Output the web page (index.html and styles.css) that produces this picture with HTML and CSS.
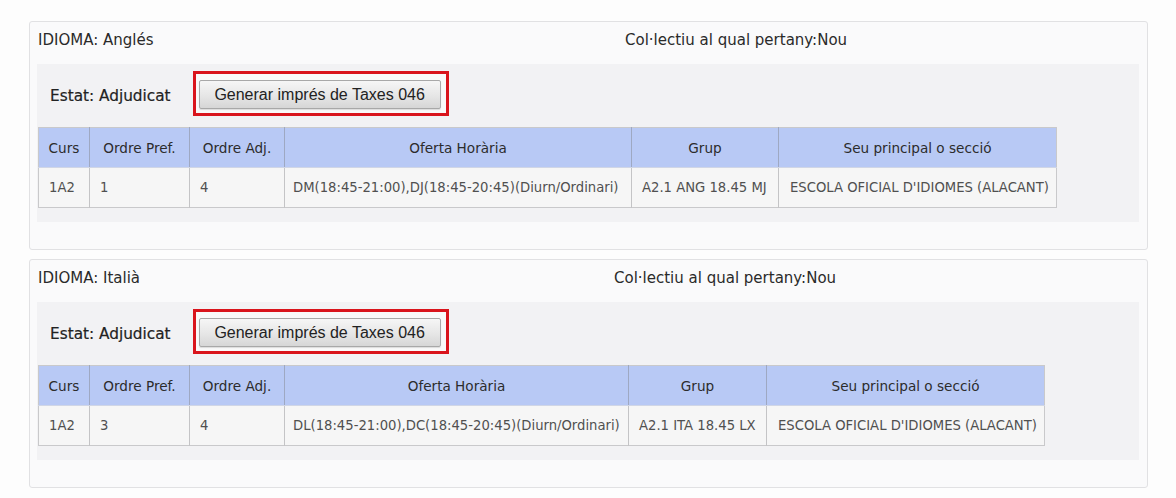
FILE: index.html
```html
<!DOCTYPE html>
<html lang="ca">
<head>
<meta charset="utf-8">
<title>Adjudicació</title>
<link rel="stylesheet" href="styles.css">
</head>
<body>
<main class="page">
  <section class="panel">
    <div class="panel-head head-a">
      <span class="idioma">IDIOMA: Anglés</span>
      <span class="colectiu">Col·lectiu al qual pertany:Nou</span>
    </div>
    <div class="inner">
      <div class="estat-row">
        <span class="estat">Estat: Adjudicat</span>
        <span class="mark"><button class="btn" type="button">Generar imprés de Taxes 046</button></span>
      </div>
      <table class="tbl tbl-a">
        <colgroup>
          <col class="c-curs"><col class="c-pref"><col class="c-adj"><col class="c-of-a"><col class="c-grup-a"><col class="c-seu">
        </colgroup>
        <thead>
          <tr><th>Curs</th><th>Ordre Pref.</th><th>Ordre Adj.</th><th>Oferta Horària</th><th>Grup</th><th>Seu principal o secció</th></tr>
        </thead>
        <tbody>
          <tr><td>1A2</td><td>1</td><td>4</td><td>DM(18:45-21:00),DJ(18:45-20:45)(Diurn/Ordinari)</td><td>A2.1 ANG 18.45 MJ</td><td>ESCOLA OFICIAL D'IDIOMES (ALACANT)</td></tr>
        </tbody>
      </table>
    </div>
  </section>
  <section class="panel">
    <div class="panel-head head-b">
      <span class="idioma">IDIOMA: Italià</span>
      <span class="colectiu">Col·lectiu al qual pertany:Nou</span>
    </div>
    <div class="inner">
      <div class="estat-row">
        <span class="estat">Estat: Adjudicat</span>
        <span class="mark"><button class="btn" type="button">Generar imprés de Taxes 046</button></span>
      </div>
      <table class="tbl tbl-b">
        <colgroup>
          <col class="c-curs"><col class="c-pref"><col class="c-adj"><col class="c-of-b"><col class="c-grup-b"><col class="c-seu">
        </colgroup>
        <thead>
          <tr><th>Curs</th><th>Ordre Pref.</th><th>Ordre Adj.</th><th>Oferta Horària</th><th>Grup</th><th>Seu principal o secció</th></tr>
        </thead>
        <tbody>
          <tr><td>1A2</td><td>3</td><td>4</td><td>DL(18:45-21:00),DC(18:45-20:45)(Diurn/Ordinari)</td><td>A2.1 ITA 18.45 LX</td><td>ESCOLA OFICIAL D'IDIOMES (ALACANT)</td></tr>
        </tbody>
      </table>
    </div>
  </section>
</main>
</body>
</html>
```
FILE: styles.css
```css
html, body {
  margin: 0;
  padding: 0;
  background: #fdfdfd;
}
body {
  font-family: "DejaVu Sans", Verdana, sans-serif;
  color: #2a2a2a;
}
.page {
  display: flex;
  flex-direction: column;
  gap: 9px;
  padding: 21px 28px 0 29px;
}
.panel {
  border: 1px solid #e1e1e3;
  border-radius: 3px;
  background: #fafafb;
  padding: 0 8px 26px 7px;
  height: 201px;
}
.panel-head {
  display: grid;
  align-items: center;
  height: 20px;
  padding: 8px 0 14px 1px;
  font-size: 15px;
  line-height: 20px;
  color: #2a2a2a;
}
.head-a { grid-template-columns: 587px auto; }
.head-b { grid-template-columns: 576px auto; }
.inner {
  background: #f2f2f4;
  padding: 7px 0 15px 1px;
  height: 136px;
}
.estat-row {
  display: flex;
  align-items: center;
  padding-left: 12px;
  margin-bottom: 11px;
}
.estat {
  font-size: 15.3px;
  color: #222;
  -webkit-text-stroke: 0.2px #222;
  margin-right: 22px;
  padding-top: 4px;
}
.mark {
  display: inline-block;
  border: 3px solid #d9141c;
  padding: 6px 5px 4px 3px;
  background: #f9f9f9;
  line-height: 0;
}
.btn {
  width: 242px;
  height: 29px;
  padding: 0;
  border: 1px solid #a8a8a8;
  border-radius: 2px;
  background: linear-gradient(#f6f6f6, #e6e6e6 55%, #d6d6d6);
  box-shadow: 0 1px 1px rgba(0,0,0,0.12);
  font-family: "Liberation Sans", Arial, sans-serif;
  font-size: 16px;
  color: #222;
  line-height: 27px;
}
.tbl {
  table-layout: fixed;
  border-collapse: collapse;
  border: 1px solid #c9c9cb;
}
.tbl-a { width: 1018px; }
.tbl-b { width: 1006px; }
.c-curs { width: 51px; }
.c-pref { width: 100px; }
.c-adj { width: 95px; }
.c-of-a { width: 347px; }
.c-grup-a { width: 147px; }
.c-of-b { width: 344px; }
.c-grup-b { width: 138px; }
.c-seu { width: 278px; }
.tbl th {
  height: 39px;
  padding: 0;
  background: #b8c9f5;
  border-left: 1px solid #9ea8c2;
  border-bottom: 1px solid #d0d6e6;
  font-weight: normal;
  font-size: 13.6px;
  color: #2c2c2c;
  text-align: center;
  white-space: nowrap;
}
.tbl th:first-child, .tbl td:first-child { border-left: none; }
.tbl td {
  height: 39px;
  padding: 0 0 0 10px;
  background: #f6f6f6;
  border-left: 1px solid #c4c4c6;
  font-size: 13.2px;
  color: #505050;
  white-space: nowrap;
  overflow: hidden;
}
.tbl td:nth-child(4) { padding-left: 8px; }
.tbl td:nth-child(6) { padding-left: 11px; }
```
